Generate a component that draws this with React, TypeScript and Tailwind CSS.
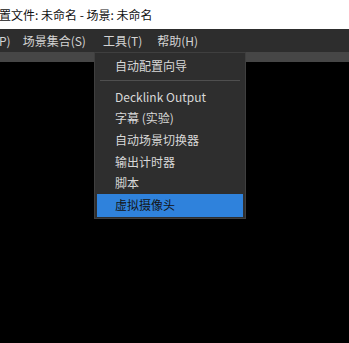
import React from 'react';

const items = ['Decklink Output', '字幕 (实验)', '自动场景切换器', '输出计时器', '脚本'];

const font = { fontFamily: '"Noto Sans CJK SC", "Noto Sans", sans-serif' };

export default function App() {
  return (
    <div className="relative w-[349px] h-[343px] overflow-hidden bg-black" style={font}>
      {/* title bar */}
      <div className="h-[29px] bg-white flex items-center overflow-hidden">
        <span className="-ml-[13px] whitespace-nowrap text-[12px] text-[#111]">配置文件: 未命名 - 场景: 未命名</span>
      </div>

      {/* menu bar */}
      <div className="h-[23px] bg-[#2d2d2d] flex items-center text-[12px] text-[#d4d4d4] whitespace-nowrap">
        <span className="-ml-[1px]">P)</span>
        <span className="ml-[12px]">场景集合(S)</span>
        <span className="ml-[17px]">工具(T)</span>
        <span className="ml-[15px]">帮助(H)</span>
      </div>

      <div className="h-[10px] bg-[#464646]" />

      {/* tools dropdown */}
      <div className="absolute top-[52px] left-[94px] w-[152px] h-[167px] bg-[#2e2e2e] border border-[#3f3f3f] pt-[2px] text-[12px] text-[#d8d8d8]">
        <div className="h-[22px] flex items-center pl-[20px]">自动配置向导</div>
        <div className="h-[9px] flex items-start px-[5px]">
          <div className="mt-[3px] w-full h-px bg-[#4f4f4f]" />
        </div>
        {items.map((t) => (
          <div key={t} className="h-[21.6px] flex items-center pl-[20px]">
            {t}
          </div>
        ))}
        <div className="mx-[2px] h-[23px] flex items-center pl-[18px] bg-[#2f82dc] text-[#141414]">虚拟摄像头</div>
      </div>
    </div>
  );
}
